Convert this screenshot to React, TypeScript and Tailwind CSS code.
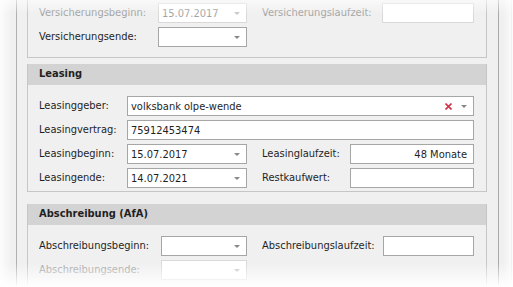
import React from "react";

const font = { fontFamily: '"DejaVu Sans Condensed", "Liberation Sans", Tahoma, sans-serif' };

function Arrow({ disabled }: { disabled?: boolean }) {
  return (
    <svg width="6" height="3" viewBox="0 0 6 3" className="shrink-0">
      <path d="M0 0 H6 L3 3 Z" fill={disabled ? "#c8c8c8" : "#888888"} />
    </svg>
  );
}

function ClearX() {
  return (
    <svg width="7" height="7" viewBox="0 0 7 7" className="shrink-0">
      <path d="M0.5 0.5 L6.5 6.5 M6.5 0.5 L0.5 6.5" stroke="#d2334a" strokeWidth="1.6" />
    </svg>
  );
}

function Field({
  width,
  value,
  combo,
  disabled,
  clear,
  right,
}: {
  width: string;
  value?: string;
  combo?: boolean;
  disabled?: boolean;
  clear?: boolean;
  right?: boolean;
}) {
  return (
    <div
      className={`${width} h-[20px] flex items-center bg-white border pl-[3px] pr-[6px] ${
        disabled ? "border-[#d9d9d9] text-[#a3a3a3]" : "border-[#a6a6a6] text-[#1f1f1f]"
      }`}
    >
      <span className={`flex-1 truncate leading-none ${right ? "text-right" : ""}`}>{value}</span>
      {clear && (
        <span className="mr-[9px] flex items-center">
          <ClearX />
        </span>
      )}
      {combo && <Arrow disabled={disabled} />}
    </div>
  );
}

function Label({ text, width, disabled }: { text: string; width: string; disabled?: boolean }) {
  return <div className={`${width} shrink-0 ${disabled ? "text-[#a3a3a3]" : "text-[#1f1f1f]"}`}>{text}</div>;
}

function Header({ title }: { title: string }) {
  return (
    <div className="h-[21px] bg-[#d3d3d3] flex items-center pl-[11px] font-bold text-[#1f1f1f]">{title}</div>
  );
}

export default function App() {
  return (
    <div className="relative w-[513px] h-[287px] overflow-hidden bg-[#f0f0f0] text-[11px]" style={font}>
      <div className="flex h-full">
        <div className="w-[16px] shrink-0" />
        <div className="w-px shrink-0 bg-[#b0b0b0]" />
        <div className="w-[10px] shrink-0" />

        {/* content column */}
        <div className="w-[460px] shrink-0 flex flex-col">
          {/* Versicherung (cut off at top) */}
          <div className="border-x border-b border-[#c6c6c6] pl-[11px] pr-[12px] pt-[3px] pb-[10px] flex flex-col gap-[4px]">
            <div className="flex items-center">
              <Label text="Versicherungsbeginn:" width="w-[119px]" disabled />
              <Field width="w-[89px]" value="15.07.2017" combo disabled />
              <div className="w-[15px]" />
              <Label text="Versicherungslaufzeit:" width="w-[120px]" disabled />
              <Field width="w-[92px]" disabled />
            </div>
            <div className="flex items-center">
              <Label text="Versicherungsende:" width="w-[119px]" />
              <Field width="w-[89px]" combo />
            </div>
          </div>

          <div className="h-[6px]" />

          {/* Leasing */}
          <div className="border-x border-b border-[#c6c6c6]">
            <Header title="Leasing" />
            <div className="pl-[11px] pr-[12px] pt-[11px] pb-[3px] flex flex-col gap-[4px]">
              <div className="flex items-center">
                <Label text="Leasinggeber:" width="w-[88px]" />
                <Field width="w-[347px]" value="volksbank olpe-wende" combo clear />
              </div>
              <div className="flex items-center">
                <Label text="Leasingvertrag:" width="w-[88px]" />
                <Field width="w-[347px]" value="75912453474" />
              </div>
              <div className="flex items-center">
                <Label text="Leasingbeginn:" width="w-[88px]" />
                <Field width="w-[120px]" value="15.07.2017" combo />
                <div className="w-[15px]" />
                <Label text="Leasinglaufzeit:" width="w-[88px]" />
                <Field width="w-[124px]" value="48 Monate" right />
              </div>
              <div className="flex items-center">
                <Label text="Leasingende:" width="w-[88px]" />
                <Field width="w-[120px]" value="14.07.2021" combo />
                <div className="w-[15px]" />
                <Label text="Restkaufwert:" width="w-[88px]" />
                <Field width="w-[124px]" />
              </div>
            </div>
          </div>

          <div className="h-[12px]" />

          {/* Abschreibung */}
          <div className="border-x border-[#c6c6c6] flex-1">
            <Header title="Abschreibung (AfA)" />
            <div className="pl-[11px] pr-[12px] pt-[11px] flex flex-col gap-[4px]">
              <div className="flex items-center">
                <Label text="Abschreibungsbeginn:" width="w-[122px]" />
                <Field width="w-[86px]" combo />
                <div className="w-[15px]" />
                <Label text="Abschreibungslaufzeit:" width="w-[121px]" />
                <Field width="w-[91px]" />
              </div>
              <div className="flex items-center">
                <Label text="Abschreibungsende:" width="w-[122px]" disabled />
                <Field width="w-[86px]" combo disabled />
              </div>
            </div>
          </div>
        </div>

        <div className="w-[11px] shrink-0" />
        <div className="w-px shrink-0 bg-[#a9a9a9]" />
        <div className="w-[12px] shrink-0" />
        <div className="w-px shrink-0 bg-[#cfcfcf]" />
      </div>

      {/* soft fade on the edges */}
      <div className="pointer-events-none absolute inset-x-0 top-0 h-[14px] bg-linear-to-b from-white/60 to-transparent" />
      <div className="pointer-events-none absolute inset-x-0 bottom-0 h-[24px] bg-linear-to-t from-white to-transparent" />
      <div className="pointer-events-none absolute inset-y-0 left-0 w-[12px] bg-linear-to-r from-white/80 to-transparent" />
      <div className="pointer-events-none absolute inset-y-0 right-0 w-[10px] bg-linear-to-l from-white/80 to-transparent" />
    </div>
  );
}
